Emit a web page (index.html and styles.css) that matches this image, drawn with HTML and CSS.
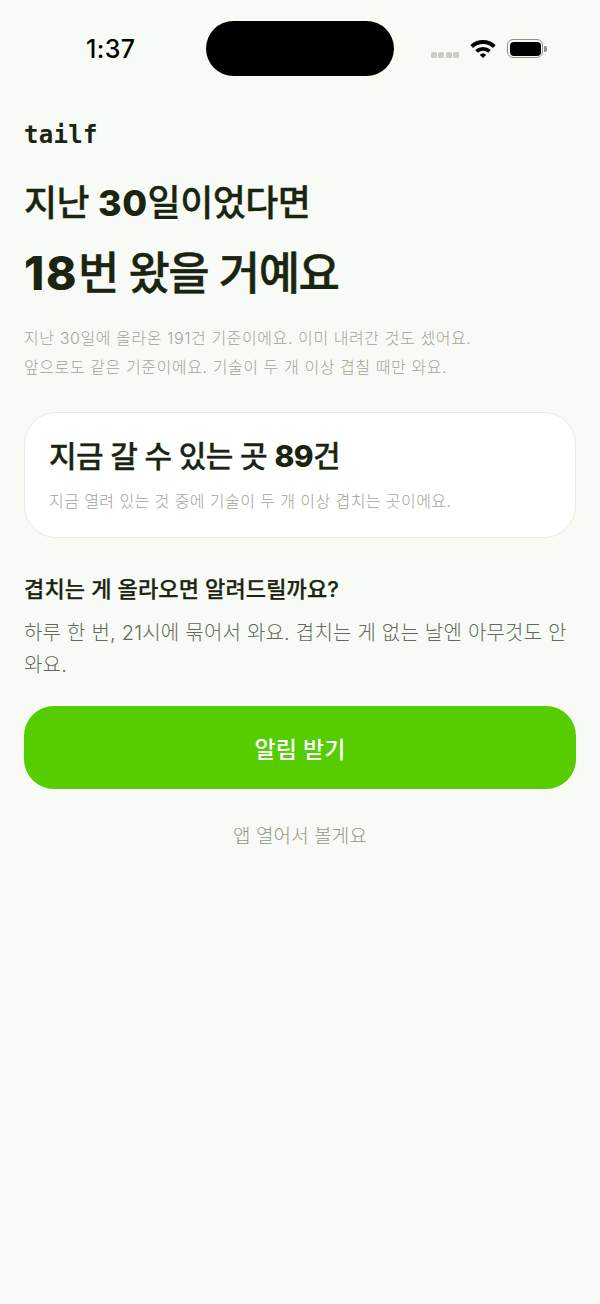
FILE: index.html
```html
<!DOCTYPE html>
<html lang="ko">
<head>
  <meta charset="UTF-8" />
  <meta name="viewport" content="width=device-width, initial-scale=1.0"/>
  <title>tailf</title>
  <link rel="stylesheet" href="styles.css">
</head>
<body>
  <div class="status-bar">
    <span class="clock">1:37</span>
    <div class="island"></div>
    <div class="status-icons">
      <div class="signal"><i></i><i></i><i></i><i></i></div>
      <svg class="wifi" width="26" height="19" viewBox="0 0 22 16">
        <path d="M0.3 5.2 A15.4 15.4 0 0 1 21.7 5.2 L19.4 7.6 A12 12 0 0 0 2.6 7.6 Z" fill="#000"/>
        <path d="M4.4 9.3 A9.6 9.6 0 0 1 17.6 9.3 L15.4 11.6 A6.4 6.4 0 0 0 6.6 11.6 Z" fill="#000"/>
        <path d="M8.3 13.4 A3.9 3.9 0 0 1 13.7 13.4 L11 16 Z" fill="#000"/>
      </svg>
      <div class="battery"><div class="battery-fill"></div></div>
      <div class="battery-cap"></div>
    </div>
  </div>

  <main class="content">
    <div class="logo">tailf</div>
    <h1 class="lead">지난 <b>30</b>일이었다면</h1>
    <h2 class="result"><b>18</b>번 왔을 거예요</h2>
    <p class="note">지난 30일에 올라온 191건 기준이에요. 이미 내려간 것도 셌어요.<br>앞으로도 같은 기준이에요. 기술이 두 개 이상 겹칠 때만 와요.</p>

    <section class="card">
      <h3 class="card-title">지금 갈 수 있는 곳 <b>89</b>건</h3>
      <p class="card-note">지금 열려 있는 것 중에 기술이 두 개 이상 겹치는 곳이에요.</p>
    </section>

    <h4 class="ask">겹치는 게 올라오면 알려드릴까요?</h4>
    <p class="ask-note">하루 한 번, 21시에 묶어서 와요. 겹치는 게 없는 날엔 아무것도 안 와요.</p>

    <button class="primary" type="button">알림 받기</button>
    <a class="later">앱 열어서 볼게요</a>
  </main>
</body>
</html>
```

FILE: styles.css
```css
* {
  box-sizing: border-box;
}
html, body {
  margin: 0;
  height: 100%;
}
body {
  font-family: Inter, "Noto Sans CJK KR", sans-serif;
  background: #F8FBF5;
  color: #1A2410;
}
.status-bar {
  height: 94px;
  position: relative;
  display: flex;
  justify-content: space-between;
  padding: 0 53px 0 86px;
}
.clock {
  margin-top: 34px;
  font-size: 25px;
  line-height: 30px;
  font-weight: 500;
  letter-spacing: 0.4px;
  color: #000;
}
.island {
  position: absolute;
  left: 206px;
  top: 21px;
  width: 188px;
  height: 55px;
  background: #000;
  border-radius: 28px;
}
.status-icons {
  display: flex;
  align-items: center;
  height: 19px;
  margin-top: 39px;
}
.signal {
  display: flex;
  gap: 1.5px;
  margin-top: 13px;
  margin-right: 11px;
}
.signal i {
  width: 6px;
  height: 6px;
  border-radius: 1.5px;
  background: #C9CEC4;
}
.wifi {
  margin-right: 11px;
}
.battery {
  width: 36px;
  height: 19px;
  border: 1.5px solid #8E918A;
  border-radius: 6px;
  padding: 1.5px;
}
.battery-fill {
  height: 100%;
  background: #000;
  border-radius: 4px;
}
.battery-cap {
  width: 3px;
  height: 6px;
  margin-left: 1px;
  background: #8E918A;
  border-radius: 0 2px 2px 0;
}
.content {
  padding: 0 24px;
}
b {
  font-weight: 800;
  line-height: 1;
  -webkit-text-stroke: 0;
}
.logo {
  margin-top: 26px;
  font-family: "DejaVu Sans Mono", monospace;
  font-weight: 700;
  font-size: 24px;
  line-height: 30px;
  letter-spacing: 0.3px;
}
.lead {
  margin: 31px 0 0;
  font-size: 36px;
  line-height: 44px;
  font-weight: 500;
  letter-spacing: -0.6px;
  -webkit-text-stroke: 0.3px;
}
.lead b {
  letter-spacing: 0.5px;
}
.result {
  margin: 20px 0 0;
  font-size: 45px;
  line-height: 58px;
  font-weight: 500;
  letter-spacing: -1.5px;
  -webkit-text-stroke: 0.4px;
}
.result b {
  font-size: 46px;
  letter-spacing: 1.6px;
}
.note {
  margin: 21px 0 0;
  font-size: 16px;
  line-height: 29px;
  font-weight: 300;
  letter-spacing: 0.58px;
  color: #9EA697;
}
.card {
  margin-top: 30px;
  height: 126px;
  padding: 23px 24px;
  background: #fff;
  border: 1.5px solid #E6EEDD;
  border-radius: 32px;
}
.card-title {
  margin: 0;
  font-size: 30px;
  line-height: 40px;
  font-weight: 500;
  letter-spacing: -0.65px;
  -webkit-text-stroke: 0.3px;
}
.card-note {
  margin: 13px 0 0;
  font-size: 16px;
  line-height: 24px;
  font-weight: 300;
  letter-spacing: 0.42px;
  color: #9EA697;
}
.ask {
  margin: 36px 0 0;
  font-size: 22px;
  line-height: 30px;
  font-weight: 500;
  letter-spacing: 0.14px;
  -webkit-text-stroke: 0.25px;
}
.ask-note {
  margin: 13px 0 0;
  font-size: 20px;
  line-height: 32px;
  font-weight: 300;
  letter-spacing: 0.2px;
  color: #61695A;
}
.primary {
  display: block;
  width: 100%;
  height: 83px;
  margin-top: 25px;
  border: none;
  border-radius: 30px;
  background: #55CD00;
  color: #fff;
  font-family: inherit;
  font-size: 23px;
  font-weight: 500;
}
.later {
  display: block;
  margin-top: 33px;
  text-align: center;
  font-size: 19px;
  line-height: 30px;
  font-weight: 300;
  letter-spacing: 0.1px;
  color: #8F9887;
}
```
